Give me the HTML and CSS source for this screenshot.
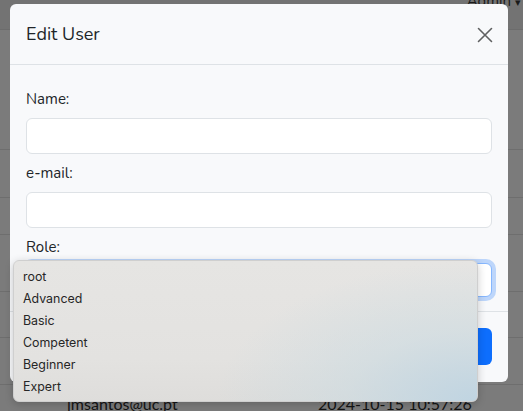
FILE: index.html
```html
<!DOCTYPE html>
<html>
<head>
<meta charset="utf-8">
<link rel="stylesheet" href="styles.css">
</head>
<body>
<div class="page">
  <div class="topbar"><span class="admin">Admin <span class="caret">&#9662;</span></span></div>
  <div class="rows">
    <div class="row r1"></div>
    <div class="row r2"></div>
    <div class="row r3"></div>
    <div class="row r4"></div>
    <div class="row r5"></div>
    <div class="row r6"></div>
    <div class="row r7"><span class="c-email">jmsantos@uc.pt</span><span class="c-date">2024-10-15 10:57:26</span></div>
  </div>
</div>

<div class="modal">
  <div class="modal-header">
    <h5 class="modal-title">Edit User</h5>
    <svg class="close" width="16" height="16" viewBox="0 0 16 16"><path d="M1.5 1.5 L14.5 14.5 M14.5 1.5 L1.5 14.5" stroke="#5f6061" stroke-width="1.6" fill="none" stroke-linecap="round"/></svg>
  </div>
  <div class="modal-body">
    <label class="label">Name:</label>
    <div class="input"></div>
    <label class="label">e-mail:</label>
    <div class="input"></div>
    <label class="label">Role:</label>
    <div class="input select"></div>
  </div>
  <div class="modal-footer">
    <button class="btn">Save</button>
  </div>
</div>

<div class="dropdown">
  <div class="opt">root</div>
  <div class="opt">Advanced</div>
  <div class="opt">Basic</div>
  <div class="opt">Competent</div>
  <div class="opt">Beginner</div>
  <div class="opt">Expert</div>
</div>
</body>
</html>
```
FILE: styles.css
```css
html, body {
  margin: 0;
  padding: 0;
  width: 523px;
  height: 411px;
  overflow: hidden;
}
body {
  background: #7b7b7b;
  font-family: "Nunito", "Lato", "Noto Sans", sans-serif;
  color: #212529;
  position: relative;
}
.page {
  display: flex;
  flex-direction: column;
}
.topbar {
  height: 30px;
  background: #737373;
  border-bottom: 1px solid #6c6c6c;
  box-sizing: border-box;
  display: flex;
  justify-content: flex-end;
  align-items: flex-start;
}
.admin {
  font-size: 15px;
  color: #1a1a1a;
  margin-top: -9px;
  margin-right: 2px;
}
.caret { font-size: 11px; }
.rows { display: flex; flex-direction: column; }
.row {
  border-bottom: 1px solid #6e6e6e;
  box-sizing: border-box;
  display: flex;
  align-items: flex-start;
}
.r1 { height: 120px; }
.r2 { height: 48px; }
.r3 { height: 37px; }
.r4 { height: 57px; }
.r5 { height: 46px; }
.r6 { height: 47px; }
.r7 { height: 40px; border-bottom: none; font-family: "Lato", sans-serif; font-size: 16px; color: #141414; }
.c-email { margin-left: 67px; margin-top: 9px; width: 251px; }
.c-date { margin-top: 9px; }

.modal {
  position: absolute;
  left: 10px;
  top: 4px;
  width: 498px;
  height: 378px;
  background: #f8f9fb;
  border-radius: 6px;
  display: flex;
  flex-direction: column;
  box-sizing: border-box;
}
.modal-header {
  height: 61px;
  border-bottom: 1px solid #dee2e6;
  display: flex;
  align-items: center;
  justify-content: space-between;
  padding: 0 15px 0 16px;
  box-sizing: border-box;
}
.modal-title {
  margin: 0;
  font-size: 18px;
  font-weight: 400;
  line-height: 1.5;
  color: #212529;
}
.close { display: block; margin-top: 1px; }
.modal-body {
  padding: 22px 16px 14px;
  display: flex;
  flex-direction: column;
  border-bottom: 1px solid #dee2e6;
}
.label {
  font-size: 15px;
  line-height: 24px;
  height: 24px;
  margin-bottom: 7px;
  color: #212529;
}
.input {
  height: 36px;
  background: #fff;
  border: 1px solid #dee2e6;
  border-radius: 6px;
  box-sizing: border-box;
  margin-bottom: 7px;
}
.select {
  margin-top: -3px;
  height: 34px;
  margin-bottom: 0;
  border-color: #86b7fe;
  box-shadow: 0 0 0 4px rgba(13, 110, 253, 0.25);
}
.modal-footer {
  flex: 1;
  display: flex;
  justify-content: flex-end;
  align-items: flex-start;
  padding: 16px;
}
.btn {
  height: 37px;
  padding: 0 14px;
  background: #0d6efd;
  color: #fff;
  border: none;
  border-radius: 6px;
  font-family: inherit;
  font-size: 14px;
}

.dropdown {
  position: absolute;
  left: 13px;
  top: 260px;
  width: 465px;
  height: 142px;
  box-sizing: border-box;
  border: 1px solid #cfcfcf;
  border-radius: 6px;
  padding-top: 5px;
  background:
    radial-gradient(ellipse 260px 140px at 100% 100%, rgba(190, 212, 226, 0.95), rgba(200, 218, 226, 0.5) 50%, rgba(229, 228, 226, 0) 100%),
    linear-gradient(#e6e5e3, #e3e2e0 70%, #dedddb);
  box-shadow: 0 2px 8px rgba(0, 0, 0, 0.2);
  font-family: "Inter", "Liberation Sans", sans-serif;
  font-size: 12.4px;
  color: #262626;
  display: flex;
  flex-direction: column;
}
.opt {
  height: 22px;
  line-height: 22px;
  padding-left: 9px;
}
```
